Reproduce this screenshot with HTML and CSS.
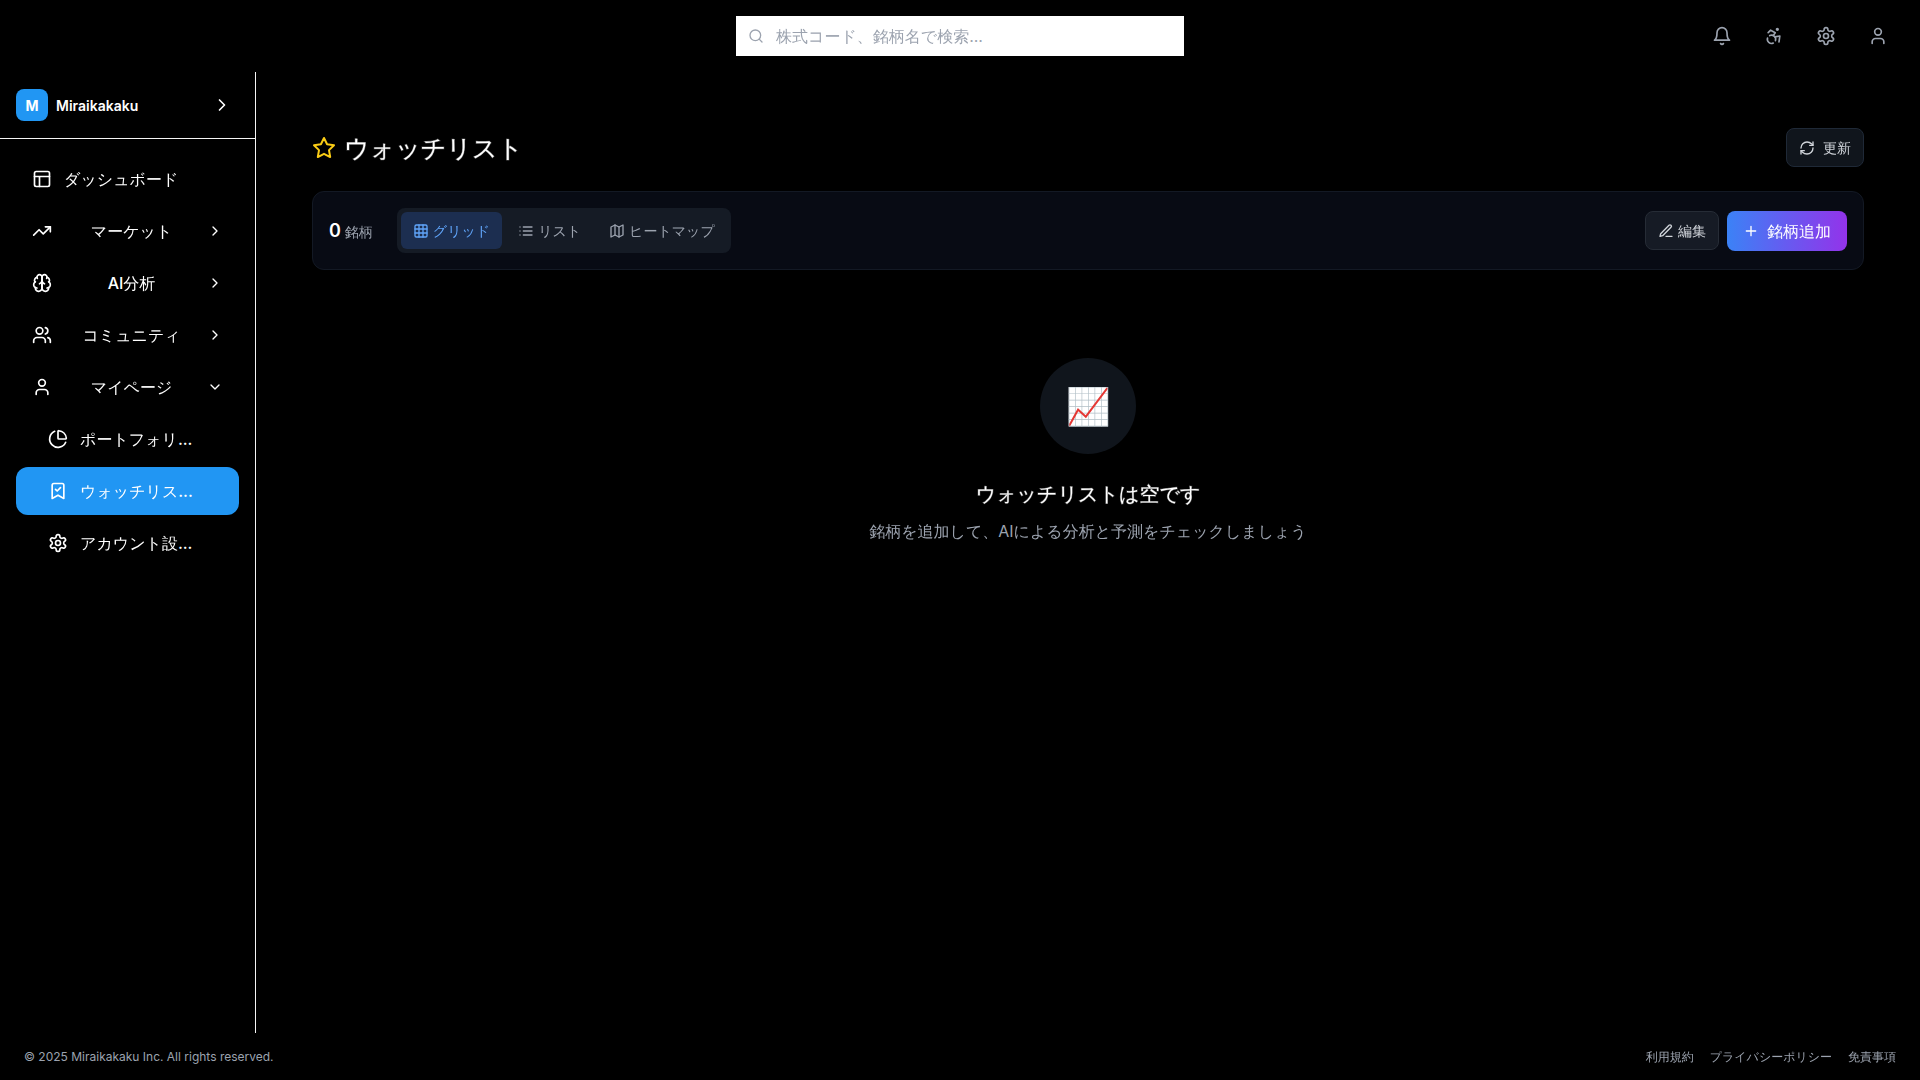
FILE: index.html
```html
<!DOCTYPE html>
<html lang="ja">
<head>
<meta charset="utf-8">
<meta name="viewport" content="width=device-width, initial-scale=1">
<title>ウォッチリスト - Miraikakaku</title>
<link rel="stylesheet" href="styles.css">
</head>
<body>
<header class="topbar">
  <form class="search" role="search">
    <svg class="icon icon-sm" viewBox="0 0 24 24"><circle cx="11" cy="11" r="8"/><path d="m21 21-4.3-4.3"/></svg>
    <input class="search-input" type="search" aria-label="検索" placeholder="株式コード、銘柄名で検索...">
  </form>
  <div class="topbar-actions">
    <button class="icon-button" type="button" aria-label="通知"><svg class="icon" viewBox="0 0 24 24"><path d="M6 8a6 6 0 0 1 12 0c0 7 3 9 3 9H3s3-2 3-9"/><path d="M10.3 21a1.94 1.94 0 0 0 3.4 0"/></svg></button>
    <button class="icon-button" type="button" aria-label="アクセシビリティ"><svg class="icon" viewBox="0 0 24 24"><circle cx="16" cy="4" r="1"/><path d="m18 19 1-7-6 1"/><path d="m5 8 3-3 5.5 3-2.36 3.5"/><path d="M4.24 14.5a5 5 0 0 0 6.88 6"/><path d="M13.76 17.5a5 5 0 0 0-6.88-6"/></svg></button>
    <button class="icon-button" type="button" aria-label="設定"><svg class="icon" viewBox="0 0 24 24"><path d="M12.22 2h-.44a2 2 0 0 0-2 2v.18a2 2 0 0 1-1 1.73l-.43.25a2 2 0 0 1-2 0l-.15-.08a2 2 0 0 0-2.73.73l-.22.38a2 2 0 0 0 .73 2.73l.15.1a2 2 0 0 1 1 1.72v.51a2 2 0 0 1-1 1.74l-.15.09a2 2 0 0 0-.73 2.73l.22.38a2 2 0 0 0 2.73.73l.15-.08a2 2 0 0 1 2 0l.43.25a2 2 0 0 1 1 1.73V20a2 2 0 0 0 2 2h.44a2 2 0 0 0 2-2v-.18a2 2 0 0 1 1-1.73l.43-.25a2 2 0 0 1 2 0l.15.08a2 2 0 0 0 2.73-.73l.22-.39a2 2 0 0 0-.73-2.73l-.15-.08a2 2 0 0 1-1-1.74v-.5a2 2 0 0 1 1-1.74l.15-.09a2 2 0 0 0 .73-2.73l-.22-.38a2 2 0 0 0-2.73-.73l-.15.08a2 2 0 0 1-2 0l-.43-.25a2 2 0 0 1-1-1.73V4a2 2 0 0 0-2-2z"/><circle cx="12" cy="12" r="3"/></svg></button>
    <button class="icon-button" type="button" aria-label="アカウント"><svg class="icon" viewBox="0 0 24 24"><path d="M19 21v-2a4 4 0 0 0-4-4H9a4 4 0 0 0-4 4v2"/><circle cx="12" cy="7" r="4"/></svg></button>
  </div>
</header>
<div class="shell">
  <aside class="sidebar">
    <div class="brand">
      <span class="brand-mark">M</span>
      <span class="brand-name">Miraikakaku</span>
      <button class="brand-toggle" type="button" aria-label="サイドバーを切り替え"><svg class="icon" viewBox="0 0 24 24"><path d="m9 18 6-6-6-6"/></svg></button>
    </div>
    <nav class="nav">
      <a class="nav-item" href="#"><svg class="icon" viewBox="0 0 24 24"><rect x="3" y="3" width="18" height="18" rx="2"/><path d="M3 9h18M9 21V9"/></svg><span>ダッシュボード</span></a>
      <button class="nav-item nav-group" type="button"><svg class="icon" viewBox="0 0 24 24"><path d="m22 7-8.5 8.5-5-5L2 17"/><path d="M16 7h6v6"/></svg><span class="nav-label">マーケット</span><svg class="icon icon-sm" viewBox="0 0 24 24"><path d="m9 18 6-6-6-6"/></svg></button>
      <button class="nav-item nav-group" type="button"><svg class="icon" viewBox="0 0 24 24"><path d="M12 5a3 3 0 1 0-5.997.125 4 4 0 0 0-2.526 5.77 4 4 0 0 0 .556 6.588A4 4 0 1 0 12 18Z"/><path d="M12 5a3 3 0 1 1 5.997.125 4 4 0 0 1 2.526 5.77 4 4 0 0 1-.556 6.588A4 4 0 1 1 12 18Z"/><path d="M15 13a4.5 4.5 0 0 1-3-4 4.5 4.5 0 0 1-3 4"/><path d="M17.599 6.5a3 3 0 0 0 .399-1.375M6.003 5.125A3 3 0 0 0 6.401 6.5M3.477 10.896a4 4 0 0 1 .585-.396M19.938 10.5a4 4 0 0 1 .585.396M6 18a4 4 0 0 1-1.967-.516M19.967 17.484A4 4 0 0 1 18 18"/></svg><span class="nav-label">AI分析</span><svg class="icon icon-sm" viewBox="0 0 24 24"><path d="m9 18 6-6-6-6"/></svg></button>
      <button class="nav-item nav-group" type="button"><svg class="icon" viewBox="0 0 24 24"><path d="M16 21v-2a4 4 0 0 0-4-4H6a4 4 0 0 0-4 4v2"/><circle cx="9" cy="7" r="4"/><path d="M22 21v-2a4 4 0 0 0-3-3.87M16 3.13a4 4 0 0 1 0 7.75"/></svg><span class="nav-label">コミュニティ</span><svg class="icon icon-sm" viewBox="0 0 24 24"><path d="m9 18 6-6-6-6"/></svg></button>
      <button class="nav-item nav-group" type="button" aria-expanded="true"><svg class="icon" viewBox="0 0 24 24"><path d="M19 21v-2a4 4 0 0 0-4-4H9a4 4 0 0 0-4 4v2"/><circle cx="12" cy="7" r="4"/></svg><span class="nav-label">マイページ</span><svg class="icon icon-sm" viewBox="0 0 24 24"><path d="m6 9 6 6 6-6"/></svg></button>
      <a class="nav-item nav-child" href="#"><svg class="icon" viewBox="0 0 24 24"><path d="M21 12c.552 0 1.005-.449.95-.998a10 10 0 0 0-8.953-8.951c-.55-.055-.998.398-.998.95v8a1 1 0 0 0 1 1z"/><path d="M21.21 15.89A10 10 0 1 1 8 2.83"/></svg><span>ポートフォリ...</span></a>
      <a class="nav-item nav-child nav-active" href="#" aria-current="page"><svg class="icon" viewBox="0 0 24 24"><path d="m19 21-7-4-7 4V5a2 2 0 0 1 2-2h10a2 2 0 0 1 2 2Z"/><path d="m9 10 2 2 4-4"/></svg><span>ウォッチリス...</span></a>
      <a class="nav-item nav-child" href="#"><svg class="icon" viewBox="0 0 24 24"><path d="M12.22 2h-.44a2 2 0 0 0-2 2v.18a2 2 0 0 1-1 1.73l-.43.25a2 2 0 0 1-2 0l-.15-.08a2 2 0 0 0-2.73.73l-.22.38a2 2 0 0 0 .73 2.73l.15.1a2 2 0 0 1 1 1.72v.51a2 2 0 0 1-1 1.74l-.15.09a2 2 0 0 0-.73 2.73l.22.38a2 2 0 0 0 2.73.73l.15-.08a2 2 0 0 1 2 0l.43.25a2 2 0 0 1 1 1.73V20a2 2 0 0 0 2 2h.44a2 2 0 0 0 2-2v-.18a2 2 0 0 1 1-1.73l.43-.25a2 2 0 0 1 2 0l.15.08a2 2 0 0 0 2.73-.73l.22-.39a2 2 0 0 0-.73-2.73l-.15-.08a2 2 0 0 1-1-1.74v-.5a2 2 0 0 1 1-1.74l.15-.09a2 2 0 0 0 .73-2.73l-.22-.38a2 2 0 0 0-2.73-.73l-.15.08a2 2 0 0 1-2 0l-.43-.25a2 2 0 0 1-1-1.73V4a2 2 0 0 0-2-2z"/><circle cx="12" cy="12" r="3"/></svg><span>アカウント設...</span></a>
    </nav>
  </aside>
  <main class="content">
    <div class="page-head">
      <h1 class="page-title"><svg class="icon icon-lg icon-star" viewBox="0 0 24 24"><path d="m12 2 3.09 6.26L22 9.27l-5 4.87 1.18 6.88L12 17.77l-6.18 3.25L7 14.14 2 9.27l6.91-1.01z"/></svg>ウォッチリスト</h1>
      <button class="button button-refresh" type="button"><svg class="icon icon-sm" viewBox="0 0 24 24"><path d="M3 12a9 9 0 0 1 9-9 9.75 9.75 0 0 1 6.74 2.74L21 8"/><path d="M21 3v5h-5"/><path d="M21 12a9 9 0 0 1-9 9 9.75 9.75 0 0 1-6.74-2.74L3 16"/><path d="M8 16H3v5"/></svg>更新</button>
    </div>
    <section class="toolbar">
      <p class="count"><strong class="count-value">0</strong> 銘柄</p>
      <div class="views">
        <button class="view view-active" type="button" aria-pressed="true"><svg class="icon icon-sm" viewBox="0 0 24 24"><rect x="3" y="3" width="18" height="18" rx="2"/><path d="M3 9h18M3 15h18M9 3v18M15 3v18"/></svg>グリッド</button>
        <button class="view" type="button" aria-pressed="false"><svg class="icon icon-sm" viewBox="0 0 24 24"><path d="M8 6h13M8 12h13M8 18h13M3 6h.01M3 12h.01M3 18h.01"/></svg>リスト</button>
        <button class="view" type="button" aria-pressed="false"><svg class="icon icon-sm" viewBox="0 0 24 24"><path d="m3 6 6-3 6 3 6-3v15l-6 3-6-3-6 3z"/><path d="M9 3v15M15 6v15"/></svg>ヒートマップ</button>
      </div>
      <div class="toolbar-actions">
        <button class="button button-edit" type="button"><svg class="icon icon-sm" viewBox="0 0 24 24"><path d="M12 20h9"/><path d="M16.5 3.5a2.12 2.12 0 0 1 3 3L7 19l-4 1 1-4Z"/></svg>編集</button>
        <button class="button-add" type="button"><svg class="icon icon-sm" viewBox="0 0 24 24"><path d="M5 12h14M12 5v14"/></svg>銘柄追加</button>
      </div>
    </section>
    <section class="empty">
      <div class="empty-icon">📈</div>
      <h2 class="empty-title">ウォッチリストは空です</h2>
      <p class="empty-text">銘柄を追加して、AIによる分析と予測をチェックしましょう</p>
    </section>
  </main>
</div>
<footer class="footer">
  <p class="copyright">© 2025 Miraikakaku Inc. All rights reserved.</p>
  <nav class="footer-links"><a href="#">利用規約</a><a href="#">プライバシーポリシー</a><a href="#">免責事項</a></nav>
</footer>
</body>
</html>
```
FILE: styles.css
```css
* { box-sizing: border-box; }

body {
  margin: 0;
  min-height: 100vh;
  display: flex;
  flex-direction: column;
  background: #000;
  color: #fff;
  font: 16px/24px Inter, "WenQuanYi Zen Hei", "Noto Sans CJK JP", sans-serif;
}

h1, h2, p { margin: 0; }
a { color: inherit; text-decoration: none; }
button { margin: 0; padding: 0; border: 0; background: none; color: inherit; font: inherit; cursor: pointer; }

.icon { width: 20px; height: 20px; flex: none; fill: none; stroke: currentColor; stroke-width: 2; stroke-linecap: round; stroke-linejoin: round; }
.icon-sm { width: 16px; height: 16px; }
.icon-lg { width: 24px; height: 24px; }
.icon-star { color: #facc15; }

.topbar {
  display: grid;
  grid-template-columns: 1fr 448px 1fr;
  align-items: center;
  padding: 16px 24px;
}
.search {
  grid-column: 2;
  display: flex;
  align-items: center;
  gap: 12px;
  height: 40px;
  padding: 0 12px;
  background: #fff;
  color: #9ca3af;
}
.search-input { flex: 1; min-width: 0; padding: 0; border: 0; outline: 0; background: none; color: #111827; font: inherit; }
.search-input::placeholder { color: #9ca3af; opacity: 1; }
.topbar-actions { display: flex; justify-content: flex-end; gap: 16px; color: #9ca3af; }
.icon-button { display: flex; padding: 8px; }

.shell { flex: 1; display: flex; }

.sidebar { width: 256px; flex: none; border-right: 1px solid #f5f5f5; }
.brand { display: flex; align-items: center; gap: 8px; height: 67px; padding: 0 15px 0 16px; border-bottom: 1px solid #f5f5f5; }
.brand-mark { width: 32px; height: 32px; border-radius: 8px; background: #2196f3; font-size: 14px; line-height: 34px; font-weight: 700; text-align: center; }
.brand-name { flex: 1; padding-top: 2px; font-size: 14px; font-weight: 600; }
.brand-toggle { display: flex; padding: 8px; }

.nav { display: flex; flex-direction: column; gap: 4px; padding: 16px; }
.nav-item { display: flex; align-items: center; gap: 12px; height: 48px; padding: 0 16px; border-radius: 12px; font-weight: 500; }
.nav-group { gap: 8px; }
.nav-label { flex: 1; padding-left: 4px; text-align: center; }
.nav-child { padding-left: 32px; }
.nav-active { background: #2196f3; }

.content { flex: 1; min-width: 0; padding: 56px; }
.page-head { display: flex; align-items: center; justify-content: space-between; margin-bottom: 24px; }
.page-title { display: flex; align-items: center; gap: 8px; font-size: 25px; line-height: 32px; font-weight: 700; }
.page-title, .empty-title { -webkit-text-stroke: 1px rgb(255 255 255 / 30%); }

.button { display: flex; align-items: center; padding: 8px 12px; border: 1px solid #1f2937; border-radius: 8px; background: #10151c; color: #d1d5db; font-size: 14px; line-height: 21px; }
.button-refresh { gap: 8px; }
.button-edit { gap: 4px; background: #161b25; border-color: #262c36; }
.button-add { display: flex; align-items: center; gap: 8px; height: 40px; padding: 0 16px; border-radius: 8px; background: linear-gradient(to right, #3b82f6, #9333ea); font-weight: 500; }

.toolbar { display: flex; align-items: center; gap: 24px; padding: 16px; border: 1px solid #131924; border-radius: 12px; background: #080b14; }
.count { padding-top: 2px; color: #9ca3af; font-size: 14px; }
.count-value { color: #fff; font-size: 18px; font-weight: 600; }
.views { display: flex; gap: 4px; padding: 4px; border-radius: 8px; background: #151b25; }
.view { display: flex; align-items: center; gap: 4px; padding: 8px 12px; border-radius: 6px; color: #9ca3af; font-size: 14px; line-height: 21px; }
.view-active { background: #1c2e50; color: #60a5fa; }
.toolbar-actions { display: flex; align-items: center; gap: 8px; margin-left: auto; }

.empty { display: flex; flex-direction: column; align-items: center; padding-top: 88px; text-align: center; }
.empty-icon { width: 96px; height: 96px; border-radius: 50%; background: #10151c; font-size: 36px; line-height: 96px; }
.empty-title { margin-top: 24px; font-size: 20px; line-height: 32px; font-weight: 600; }
.empty-text { margin-top: 8px; color: #9ca3af; line-height: 26px; }

.footer { display: flex; align-items: center; justify-content: space-between; height: 47px; padding: 0 24px; color: #9ca3af; font-size: 12px; line-height: 16px; }
.footer-links { display: flex; gap: 16px; }
```
